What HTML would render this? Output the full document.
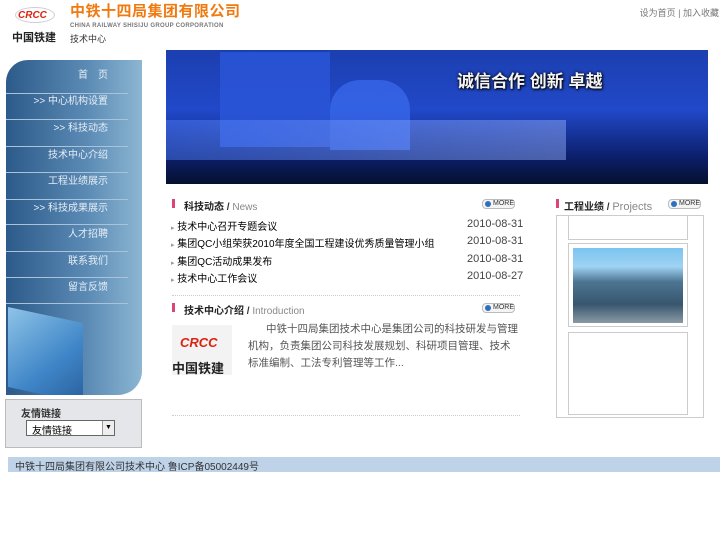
<!DOCTYPE html>
<html><head><meta charset="utf-8"><style>
*{margin:0;padding:0;box-sizing:border-box}
body{width:727px;height:545px;background:#fff;position:relative;overflow:hidden;font-family:"Liberation Sans","Noto Sans CJK SC",sans-serif;font-size:11px;color:#000}
.a{position:absolute;white-space:nowrap}
.nav{left:6px;top:60px;width:136px;height:335px;border-radius:22px 0 24px 0;background:linear-gradient(90deg,#2c5a8a,#5b8bb5 60%,#8cb6d2);overflow:hidden}
.nav div{position:absolute;right:34px;color:#e6eef6;font-size:10px}
.nav i{position:absolute;left:0;width:122px;height:1px;background:#a9c3d9}
.t{font-size:10px;color:#000}
.d{color:#444;font-size:11px}
.more{width:33px;height:10px;border:1px solid #bbb;border-radius:4px;font-size:7px;line-height:8px;color:#333;padding-left:10px;background:#f4f4f4}
.more:before{content:"";position:absolute;left:2px;top:1px;width:6px;height:6px;border-radius:50%;background:#2f6fc0}
.hd{font-weight:bold;font-size:10px;color:#222}
.bar{width:3px;height:9px;background:#d47;}
.dot{height:1px;border-top:1px dotted #ccc}
</style></head><body>
<div class="a" style="left:15px;top:7px;width:40px;height:16px;border-radius:50%;border:1px solid #ccd;"></div>
<div class="a" style="left:18px;top:10px;color:#d21;font-weight:bold;font-style:italic;font-size:10px">CRCC</div>
<div class="a" style="left:12px;top:29px;font-size:11px;font-weight:bold;color:#222">中国铁建</div>
<div class="a" style="left:70px;top:3px;font-size:15px;line-height:18px;font-weight:bold;color:#f07a10;letter-spacing:.5px">中铁十四局集团有限公司</div>
<div class="a" style="left:70px;top:23px;font-size:6px;line-height:7px;font-weight:bold;color:#777;letter-spacing:.3px">CHINA RAILWAY SHISIJU GROUP CORPORATION</div>
<div class="a" style="left:70px;top:32px;font-size:9px;color:#333">技术中心</div>
<div class="a" style="right:8px;top:6px;font-size:9px;color:#777">设为首页 | 加入收藏</div>
<div class="a nav">
<div style="top:6px">首　页</div><i style="top:33px"></i>
<div style="top:32px">&gt;&gt; 中心机构设置</div><i style="top:59px"></i>
<div style="top:59px">&gt;&gt; 科技动态</div><i style="top:86px"></i>
<div style="top:86px">技术中心介绍</div><i style="top:112px"></i>
<div style="top:112px">工程业绩展示</div><i style="top:139px"></i>
<div style="top:139px">&gt;&gt; 科技成果展示</div><i style="top:164px"></i>
<div style="top:165px">人才招聘</div><i style="top:191px"></i>
<div style="top:192px">联系我们</div><i style="top:217px"></i>
<div style="top:218px">留言反馈</div><i style="top:243px"></i>
<span class="a" style="left:2px;top:255px;width:75px;height:80px;background:linear-gradient(135deg,#8fc4e8,#3f86c8 60%,#2a5f9c);transform:skewY(12deg)"></span>
</div>
<div class="a" style="left:5px;top:399px;width:137px;height:49px;background:#e4e6ea;border:1px solid #bbb"></div>
<div class="a" style="left:21px;top:405px;font-size:10px;font-weight:bold;color:#333">友情链接</div>
<div class="a" style="left:26px;top:420px;width:89px;height:16px;border:1px solid #666;background:#fff;font-size:10px;padding:1px 0 0 5px">友情链接</div>
<div class="a" style="left:102px;top:421px;width:12px;height:14px;border-left:1px solid #999;background:#eee;font-size:7px;text-align:center;line-height:14px">▼</div>
<div class="a" style="left:166px;top:50px;width:542px;height:134px;background:linear-gradient(180deg,#1c3fb0 0%,#2148c8 45%,#0c1f6a 80%,#05102e 100%)"></div>
<div class="a" style="left:220px;top:52px;width:110px;height:95px;background:#2a56d8;opacity:.8"></div>
<div class="a" style="left:330px;top:80px;width:80px;height:70px;background:#3c6cf0;opacity:.7;border-radius:30px 30px 0 0"></div>
<div class="a" style="left:166px;top:120px;width:400px;height:40px;background:linear-gradient(90deg,#5080ff,#9bb5ff);opacity:.45"></div>
<div class="a" style="left:457px;top:67px;font-size:17px;font-weight:bold;color:#f4f4f4;text-shadow:0 0 3px #000,1px 1px 2px #000">诚信合作 创新 卓越</div>
<div class="a bar" style="left:172px;top:199px"></div>
<div class="a hd" style="left:184px;top:198px">科技动态 <span style="color:#333">/</span> <span style="font-weight:normal;color:#888">News</span></div>
<div class="a more" style="left:482px;top:199px">MORE</div>
<div class="a t" style="left:171px;top:218px"><span style="color:#999;font-size:7px">▸</span> 技术中心召开专题会议</div><div class="a d" style="left:467px;top:218px">2010-08-31</div>
<div class="a t" style="left:171px;top:235px"><span style="color:#999;font-size:7px">▸</span> 集团QC小组荣获2010年度全国工程建设优秀质量管理小组</div><div class="a d" style="left:467px;top:235px">2010-08-31</div>
<div class="a t" style="left:171px;top:253px"><span style="color:#999;font-size:7px">▸</span> 集团QC活动成果发布</div><div class="a d" style="left:467px;top:253px">2010-08-31</div>
<div class="a t" style="left:171px;top:270px"><span style="color:#999;font-size:7px">▸</span> 技术中心工作会议</div><div class="a d" style="left:467px;top:270px">2010-08-27</div>
<div class="a dot" style="left:172px;top:295px;width:348px"></div>
<div class="a bar" style="left:172px;top:303px"></div>
<div class="a hd" style="left:184px;top:302px">技术中心介绍 <span style="color:#333">/</span> <span style="font-weight:normal;color:#888">Introduction</span></div>
<div class="a more" style="left:482px;top:303px">MORE</div>
<div class="a" style="left:172px;top:325px;width:60px;height:50px;background:#f3f3f3"></div>
<div class="a" style="left:180px;top:335px;color:#d21;font-weight:bold;font-style:italic;font-size:13px">CRCC</div>
<div class="a" style="left:172px;top:358px;font-size:13px;font-weight:bold;color:#222">中国铁建</div>
<div class="a" style="left:248px;top:321px;width:270px;white-space:normal;line-height:17px;color:#555;font-size:10.5px;text-indent:18px">中铁十四局集团技术中心是集团公司的科技研发与管理机构，负责集团公司科技发展规划、科研项目管理、技术标准编制、工法专利管理等工作...</div>
<div class="a dot" style="left:172px;top:415px;width:348px"></div>
<div class="a bar" style="left:556px;top:199px"></div>
<div class="a hd" style="left:564px;top:198px">工程业绩 <span style="color:#333">/</span> <span style="font-weight:normal;color:#888;font-size:11px">Projects</span></div>
<div class="a more" style="left:668px;top:199px">MORE</div>
<div class="a" style="left:556px;top:215px;width:148px;height:203px;border:1px solid #ccc"></div>
<div class="a" style="left:568px;top:215px;width:120px;height:25px;border:1px solid #ccc;border-top:none"></div>
<div class="a" style="left:568px;top:243px;width:120px;height:84px;border:1px solid #ccc"></div>
<div class="a" style="left:573px;top:248px;width:110px;height:75px;background:linear-gradient(180deg,#7cc4f0 0%,#9fd3f2 25%,#4d7592 45%,#37566e 75%,#8a9aa5 100%)"></div>
<div class="a" style="left:568px;top:332px;width:120px;height:83px;border:1px solid #ccc"></div>
<div class="a" style="left:8px;top:457px;width:712px;height:15px;background:#bed2e8;font-size:10px;color:#333;padding:1px 0 0 7px">中铁十四局集团有限公司技术中心 鲁ICP备05002449号</div>
</body></html>
